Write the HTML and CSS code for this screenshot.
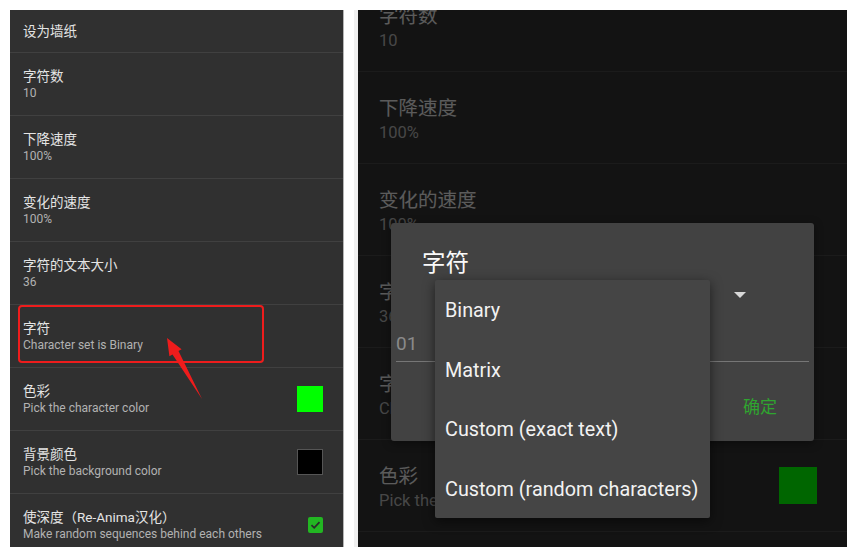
FILE: index.html
```html
<!DOCTYPE html>
<html lang="zh-CN">
<head>
<meta charset="utf-8">
<title>Re-Anima 设置</title>
<link rel="stylesheet" href="styles.css">
</head>
<body>
	<!-- 左边: 设置列表 -->
	<div class="phone phone-left">
		<ul class="prefs">
			<li class="pref pref-first">
				<div class="pref-text"><span class="title">设为墙纸</span></div>
			</li>
			<li class="pref">
				<div class="pref-text"><span class="title">字符数</span><span class="sub">10</span></div>
			</li>
			<li class="pref">
				<div class="pref-text"><span class="title">下降速度</span><span class="sub">100%</span></div>
			</li>
			<li class="pref">
				<div class="pref-text"><span class="title">变化的速度</span><span class="sub">100%</span></div>
			</li>
			<li class="pref">
				<div class="pref-text"><span class="title">字符的文本大小</span><span class="sub">36</span></div>
			</li>
			<li class="pref">
				<div class="pref-text"><span class="title">字符</span><span class="sub">Character set is Binary</span></div>
			</li>
			<li class="pref">
				<div class="pref-text"><span class="title">色彩</span><span class="sub">Pick the character color</span></div>
				<span class="swatch swatch-green"></span>
			</li>
			<li class="pref">
				<div class="pref-text"><span class="title">背景颜色</span><span class="sub">Pick the background color</span></div>
				<span class="swatch swatch-black"></span>
			</li>
			<li class="pref">
				<div class="pref-text"><span class="title">使深度（Re-Anima汉化）</span><span class="sub">Make random sequences behind each others</span></div>
				<span class="check">
					<svg width="15" height="16" viewBox="0 0 15 16"><path d="M3.5 8.2 L6.2 10.8 L11.5 5.2" fill="none" stroke="#2a2a2a" stroke-width="1.8"/></svg>
				</span>
			</li>
		</ul>
		<!-- 标注 -->
		<div class="mark-box"></div>
		<svg class="mark-arrow" width="333" height="537" viewBox="0 0 333 537">
			<polygon points="157,328 171.6,339.3 168.5,341 192,389 162.5,344.5 159.4,346.3" fill="#ee1c1c"/>
		</svg>
	</div>

	<!-- 右边: 弹出的对话框 -->
	<div class="phone phone-right">
		<ul class="prefs prefs-big">
			<li class="pref">
				<div class="pref-text"><span class="title">字符数</span><span class="sub">10</span></div>
			</li>
			<li class="pref">
				<div class="pref-text"><span class="title">下降速度</span><span class="sub">100%</span></div>
			</li>
			<li class="pref">
				<div class="pref-text"><span class="title">变化的速度</span><span class="sub">100%</span></div>
			</li>
			<li class="pref">
				<div class="pref-text"><span class="title">字符的文本大小</span><span class="sub">36</span></div>
			</li>
			<li class="pref">
				<div class="pref-text"><span class="title">字符</span><span class="sub">Character set is Binary</span></div>
			</li>
			<li class="pref">
				<div class="pref-text"><span class="title">色彩</span><span class="sub">Pick the character color</span></div>
				<span class="swatch swatch-green"></span>
			</li>
			<li class="pref">
				<div class="pref-text"><span class="title">背景颜色</span><span class="sub">Pick the background color</span></div>
			</li>
		</ul>
		<div class="scrim"></div>
		<div class="dialog">
			<h2 class="dialog-title">字符</h2>
			<div class="spinner"><span class="caret"></span></div>
			<div class="edit">01</div>
			<div class="buttons"><a class="btn">确定</a></div>
		</div>
		<ul class="menu">
			<li>Binary</li>
			<li>Matrix</li>
			<li>Custom (exact text)</li>
			<li>Custom (random characters)</li>
		</ul>
	</div>
</body>
</html>
```

FILE: styles.css
```css
*{
	margin:0;
	padding:0;
	list-style:none;
	text-decoration:none;
	box-sizing:content-box;
}
body{
	display:flex;
	align-items:flex-start;
	padding:10px;
	background:#fff;
	font-family:Roboto,"Noto Sans CJK SC",sans-serif;
}
.phone{
	height:537px;
	position:relative;
	overflow:hidden;
}
.phone-left{
	width:333px;
	background:#303030;
	border-right:1px solid #b4b4b4;
}
.phone-right{
	width:489px;
	margin-left:10px;
	background:#303030;
	border-left:4px solid #f0f0f0;
}
.pref{
	height:62px;
	display:flex;
	align-items:center;
	justify-content:space-between;
	padding:0 20px 0 13px;
	border-bottom:1px solid #404040;
}
.pref-first{
	height:42px;
}
.pref-text{
	display:flex;
	flex-direction:column;
}
.title{
	font-size:13.5px;
	line-height:18px;
	color:#e4e4e4;
}
.sub{
	font-size:12px;
	line-height:17px;
	color:#b2b2b2;
}
.swatch{
	width:26px;
	height:26px;
	flex:none;
}
.swatch-green{
	background:#00ff00;
}
.swatch-black{
	width:24px;
	height:24px;
	background:#000;
	border:1px solid #555;
}
.check{
	width:15px;
	height:16px;
	flex:none;
	border-radius:2px;
	background:#22b622;
}
.check svg{
	display:block;
}
.mark-box{
	position:absolute;
	left:8px;
	top:295px;
	width:242px;
	height:54px;
	border:2px solid #ee1c1c;
	border-radius:4px;
}
.mark-arrow{
	position:absolute;
	left:0;
	top:0;
}

/* 右边放大的列表 */
.prefs-big{
	margin-top:-30px;
}
.prefs-big .pref{
	height:91px;
	padding:0 30px 0 21px;
	border-bottom:1px solid #444;
}
.prefs-big .pref-text{
	padding-top:5px;
}
.prefs-big .title{
	font-size:19.5px;
	line-height:26px;
}
.prefs-big .sub{
	font-size:16.5px;
	line-height:22px;
}
.prefs-big .swatch{
	width:38px;
	height:37px;
}
.scrim{
	position:absolute;
	left:0;
	top:0;
	right:0;
	bottom:0;
	background:rgba(0,0,0,.6);
}
.dialog{
	position:absolute;
	left:33px;
	top:213px;
	width:423px;
	height:193px;
	padding-top:25px;
	background:#424242;
	border-radius:3px;
	box-shadow:0 2px 10px rgba(0,0,0,.4);
}
.dialog-title{
	margin-left:31px;
	font-size:23.5px;
	line-height:30px;
	font-weight:normal;
	color:#fafafa;
}
.spinner{
	height:30px;
	margin:2px 68px 0 31px;
	display:flex;
	align-items:center;
	justify-content:flex-end;
}
.caret{
	width:0;
	height:0;
	border-left:6px solid transparent;
	border-right:6px solid transparent;
	border-top:6px solid #d8d8d8;
}
.edit{
	margin:20px 5px 0;
	height:28px;
	padding-bottom:3px;
	font-size:19px;
	line-height:28px;
	color:#8a8a8a;
	border-bottom:1px solid #767676;
}
.buttons{
	margin-top:33px;
	display:flex;
	justify-content:flex-end;
	padding-right:37px;
}
.btn{
	font-size:17px;
	line-height:24px;
	color:#2fa52f;
}
.menu{
	position:absolute;
	left:77px;
	top:270px;
	width:275px;
	background:#454545;
	border-radius:2px;
	box-shadow:0 3px 12px rgba(0,0,0,.55);
}
.menu li{
	height:59.5px;
	line-height:61px;
	padding-left:10px;
	font-size:19.8px;
	color:#f2f2f2;
}
```
